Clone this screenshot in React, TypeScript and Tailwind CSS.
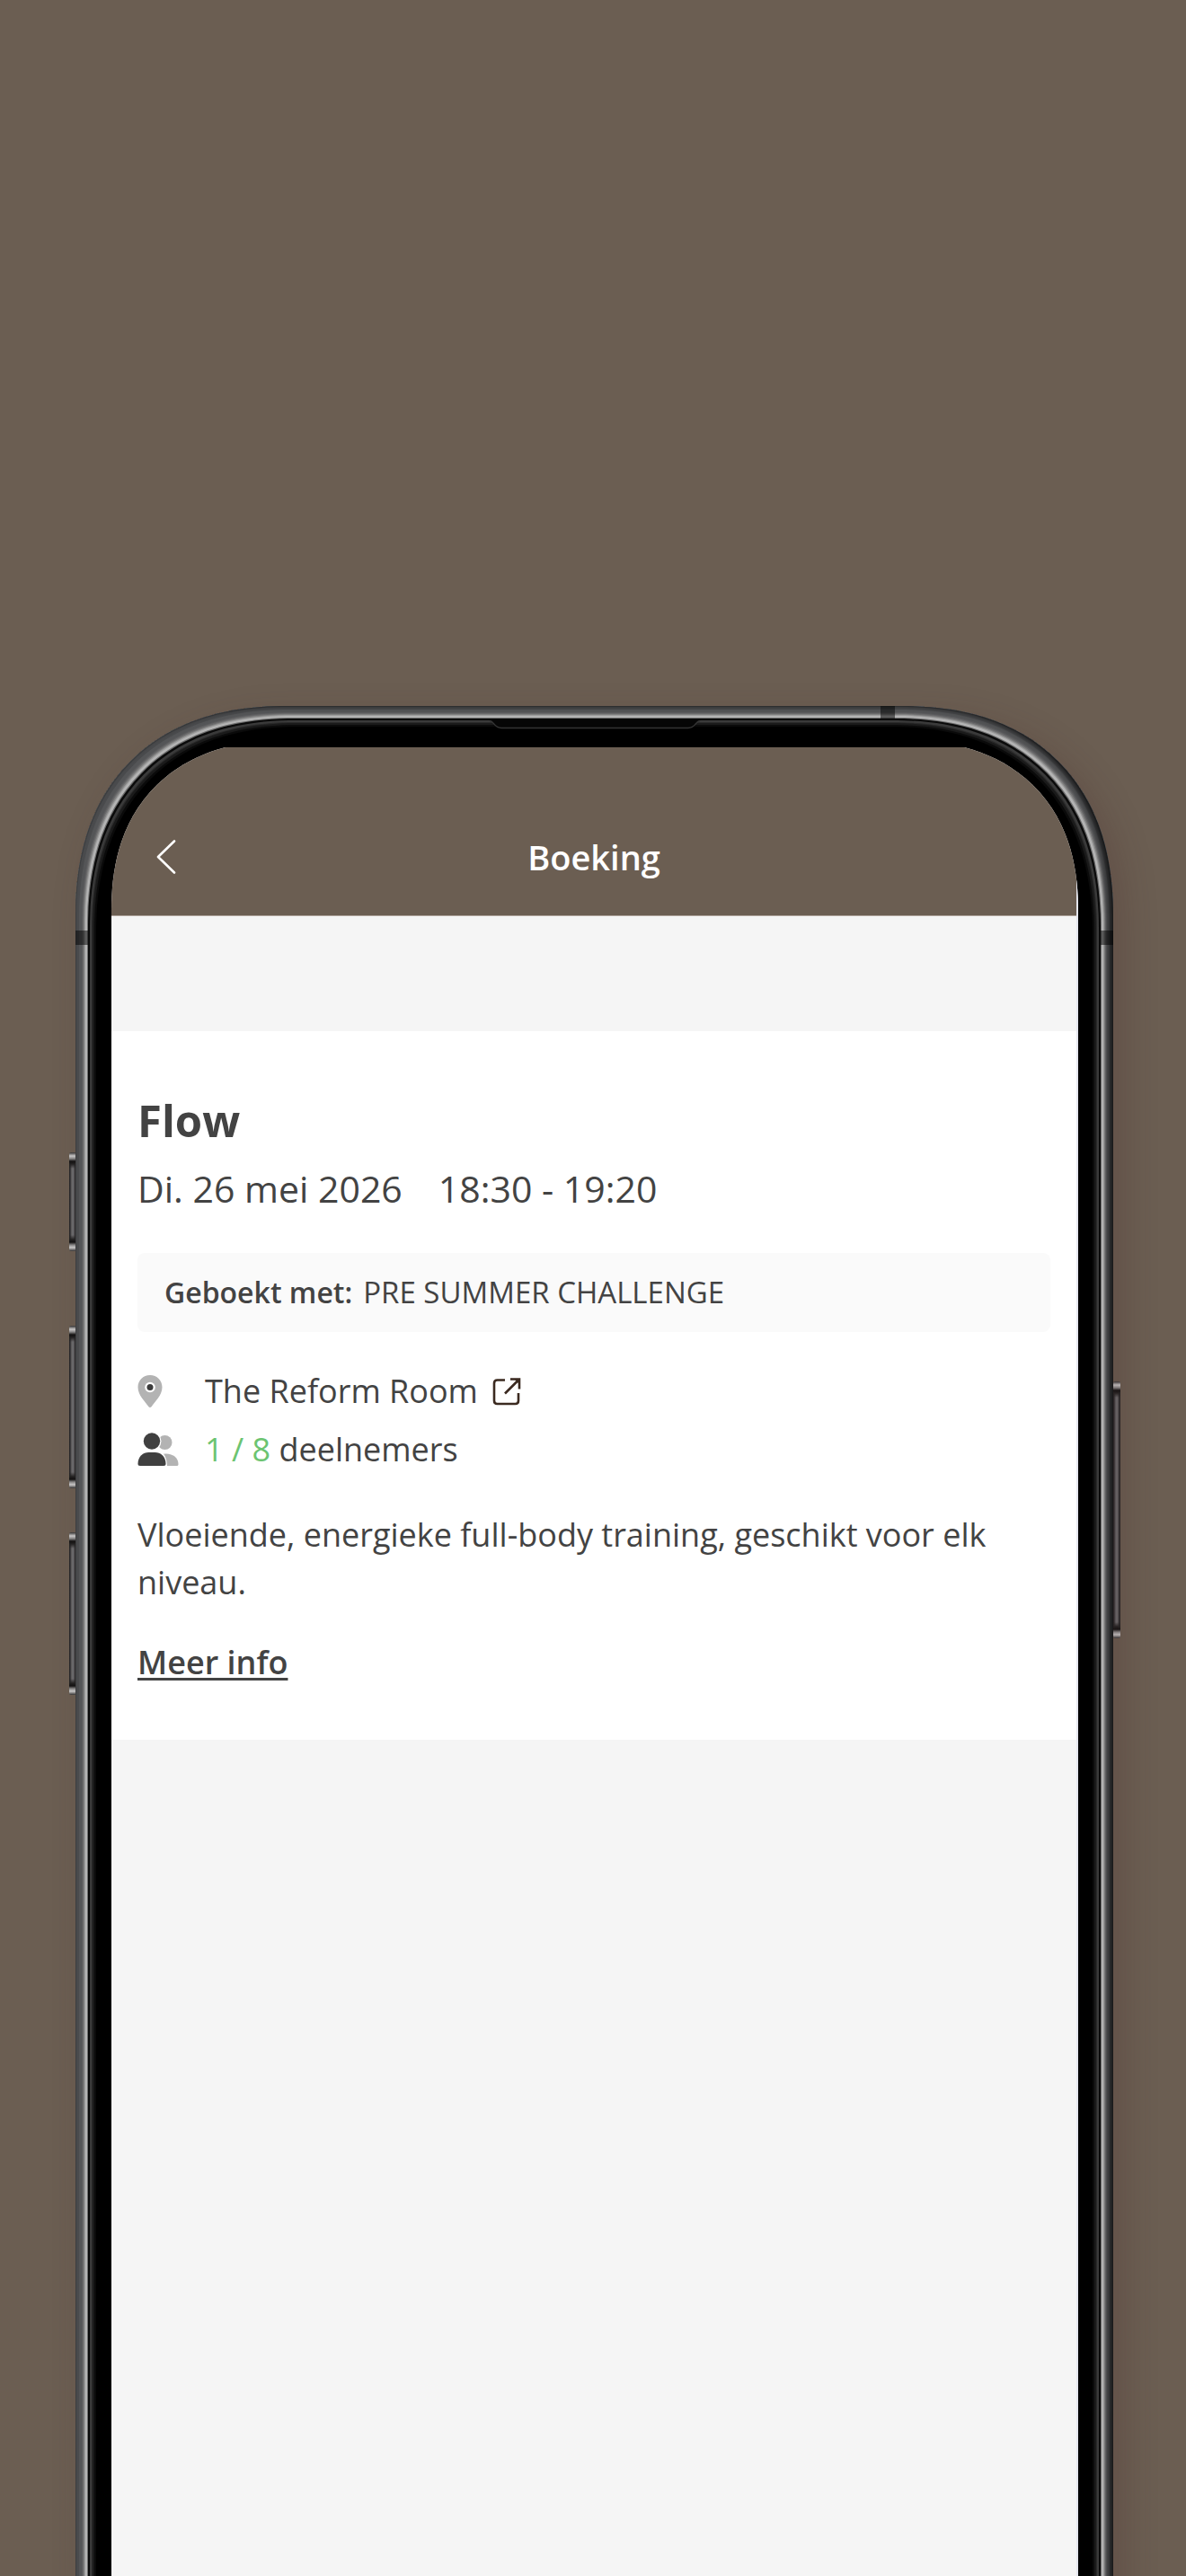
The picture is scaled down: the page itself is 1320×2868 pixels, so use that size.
import type { ReactNode } from "react";

const BUTTONS = [
  { id: "action", className: "-left-[7px] top-[497px] h-[110px]" },
  { id: "volume-up", className: "-left-[7px] top-[690px] h-[181px]" },
  { id: "volume-down", className: "-left-[7px] top-[920px] h-[181px]" },
  { id: "power", className: "-right-[8px] top-[752px] h-[286px]" },
];

function SideButton({ className }: { className: string }) {
  return (
    <div
      className={`absolute w-2 rounded-xs bg-[linear-gradient(to_bottom,#333_0,#d0d0d0_4px,#8a8a8a_7px,#111_10px,#222_13px,transparent_18px,transparent_calc(100%-18px),#222_calc(100%-13px),#111_calc(100%-10px),#8a8a8a_calc(100%-7px),#d0d0d0_calc(100%-4px),#333_100%),linear-gradient(to_right,#1d1d1f_0,#303032_1px,#6c6c6e_3px,#6c6c6e_5px,#3a3a3c_6px,#222_100%)] ${className}`}
    />
  );
}

function Speaker() {
  return (
    <svg
      className="absolute left-1/2 top-[15px] -translate-x-1/2"
      width="236"
      height="12"
      viewBox="0 0 236 12"
      fill="none"
      aria-hidden="true"
    >
      <path d="M0 0H236V1H235C230 2 230 9.500 222 9.500H14C6 9.500 6 2 1 1H0Z" fill="#060606" />
      <path d="M1 1.500C6 2 6 9.500 14 9.500H222C230 9.500 230 2 235 1.500" stroke="#343434" strokeWidth="1.500" />
    </svg>
  );
}

function Phone({ children }: { children: ReactNode }) {
  return (
    <div className="relative -mb-12 ml-[84px] mr-[81px] mt-[786px] flex flex-1 flex-col">
      {BUTTONS.map((b) => (
        <SideButton key={b.id} className={b.className} />
      ))}

      <div className="relative flex flex-1 flex-col rounded-t-[212px] bg-black pb-10 pl-10 pr-[39px] pt-[38px] shadow-[inset_-5px_0_6px_rgba(0,0,0,0.65),inset_0_0_0_1px_#3f4042,inset_0_0_0_4px_#4a4b4d,inset_0_0_0_7px_#545557,inset_0_0_0_8px_#5c5c5e,inset_0_0_0_9px_#6a6a6b,inset_0_0_0_10px_#808080,inset_0_0_0_11px_#9c9c9c,inset_0_0_0_13px_#b4b4b4,inset_0_0_0_14px_#6c6c6c,inset_0_0_0_16px_#0a0a0a,inset_0_0_0_18px_#3a3a3a,inset_0_0_0_19px_#2a2a2a,inset_0_0_0_21px_#1a1a1a,inset_0_0_0_23px_#0a0a0a,12px_12px_36px_rgba(70,40,40,0.25)] supports-[corner-shape:squircle]:rounded-t-[236px] supports-[corner-shape:squircle]:[corner-shape:superellipse(1.2)]">
        {/* antenna bands */}
        <div className="absolute left-0 top-[250px] h-4 w-[14px] bg-black/50" />
        <div className="absolute right-0 top-[250px] h-4 w-[14px] bg-black/50" />
        <div className="absolute right-[243px] top-0 h-[14px] w-4 bg-black/50" />
        <Speaker />

        <div className="flex flex-1 flex-col overflow-hidden rounded-t-[180px_170px] bg-black pt-2 supports-[corner-shape:squircle]:rounded-t-[196px_190px] supports-[corner-shape:squircle]:[corner-shape:superellipse(1.2)]">
          <div className="flex flex-1 flex-col border-r-2 border-[#e6e7f0] bg-[#f5f5f5]">{children}</div>
        </div>
      </div>
    </div>
  );
}

function BackIcon() {
  return (
    <svg width="22" height="38" viewBox="0 0 22 38" fill="none" aria-hidden="true">
      <path d="M20 1.500L2 19L20 36.500" stroke="#fff" strokeWidth="2.600" strokeLinecap="round" strokeLinejoin="round" />
    </svg>
  );
}

function PinIcon() {
  return (
    <svg width="28" height="36" viewBox="0 0 28 36" aria-hidden="true">
      <path
        d="M14 0C6.200 0 .5 6 .5 13.500C.5 22.500 9 30 12.300 35C13.200 36.200 14.800 36.200 15.700 35C19 30 27.500 22.500 27.500 13.500C27.500 6 21.800 0 14 0Z"
        fill="#b3b3b3"
      />
      <circle cx="14" cy="13.500" r="5.800" fill="#fff" />
      <circle cx="14" cy="13.500" r="3.500" fill="#3c3c3c" />
    </svg>
  );
}

function PeopleIcon() {
  return (
    <svg width="46" height="38" viewBox="0 0 46 38" aria-hidden="true">
      <circle cx="30.500" cy="11" r="8" fill="#b3b3b3" />
      <path d="M25 37V24.500C37 21 45.500 27 45.500 35C45.500 36.500 45 37 43.500 37Z" fill="#b3b3b3" />
      <circle cx="16" cy="9.500" r="10.500" fill="#fff" />
      <path d="M0 38V20H24C30 22 33 29 33 38Z" fill="#fff" />
      <circle cx="16" cy="9.500" r="9.200" fill="#404040" />
      <path
        d="M.5 34.500C.5 26.500 6.500 22 12.500 22H19.500C25.500 22 31.500 26.500 31.500 34.500C31.500 36.300 30.800 37 29 37H3C1.200 37 .5 36.300 .5 34.500Z"
        fill="#404040"
      />
    </svg>
  );
}

function ExternalIcon() {
  return (
    <svg width="32" height="32" viewBox="0 0 32 32" fill="none" stroke="#3b2a20" aria-hidden="true">
      <path d="M14 3.500H5.500Q2 3.500 2 7V26.500Q2 30 5.500 30H25.500Q29 30 29 26.500V18" strokeWidth="2.600" />
      <path d="M14 18.500L29 3.500" strokeWidth="2.600" />
      <path d="M20 2.500H30V13.500" strokeWidth="2.600" />
      <path d="M24 2H30.500V8.500Z" fill="#3b2a20" stroke="none" />
    </svg>
  );
}

export default function App() {
  return (
    <div className="flex min-h-screen flex-col overflow-hidden bg-[#6b5e52] font-['Open_Sans','Noto_Sans',sans-serif] text-[#434343]">
      <Phone>
        <header className="grid h-[188px] grid-cols-[1fr_auto_1fr] items-center border-b border-[#ab9f97] bg-[#6b5e52] px-[50px] pt-14 text-white">
          <button type="button" aria-label="Terug" className="justify-self-start">
            <BackIcon />
          </button>
          <h1 className="text-[38px] font-semibold leading-[52px]">Boeking</h1>
        </header>

        <main className="mt-32 bg-white px-[29px] pb-[60px] pt-[63px]">
          <h2 className="text-[49px] font-bold leading-[72px]">Flow</h2>
          <p className="mt-2 flex gap-10 text-[41px] font-medium leading-[64px]">
            <span>Di. 26 mei 2026</span>
            <span>18:30 - 19:20</span>
          </p>

          <p className="mt-10 flex h-[88px] items-center gap-3 rounded-lg bg-[#fafafa] px-[30px] text-[33px]">
            <strong className="text-[32px] font-semibold">Geboekt met:</strong>
            <span>PRE SUMMER CHALLENGE</span>
          </p>

          <ul className="mt-[33px] text-[36px] leading-[65px]">
            <li className="flex items-center">
              <span className="w-[75px]">
                <PinIcon />
              </span>
              <a href="#locatie" className="flex items-center gap-4">
                The Reform Room
                <ExternalIcon />
              </a>
            </li>
            <li className="flex items-center">
              <span className="w-[75px]">
                <PeopleIcon />
              </span>
              <span>
                <span className="text-[#6cc471]">1 / 8</span> deelnemers
              </span>
            </li>
          </ul>

          <p className="mt-9 text-[36px] leading-[53px]">
            Vloeiende, energieke full-body training, geschikt voor elk niveau.
          </p>
          <a
            href="#info"
            className="mt-9 inline-block text-[36px] font-semibold leading-[53px] underline decoration-3 underline-offset-4"
          >
            Meer info
          </a>
        </main>
      </Phone>
    </div>
  );
}
